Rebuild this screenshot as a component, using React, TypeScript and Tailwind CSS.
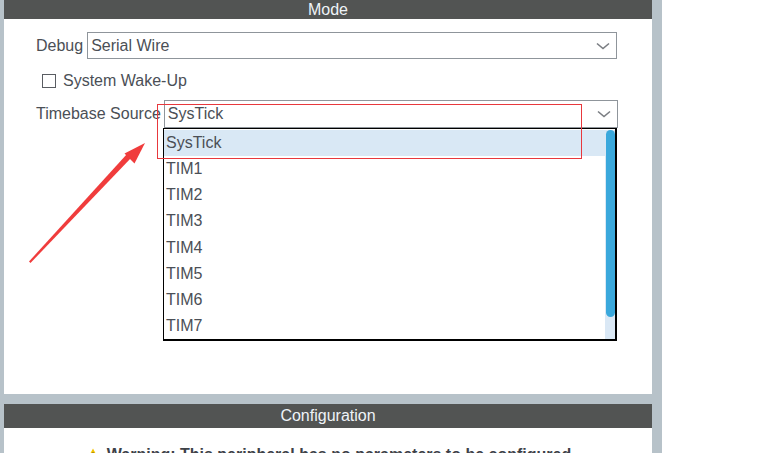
const font = { fontFamily: '"Liberation Sans", Arial, sans-serif' };

const Chevron = () => (
  <svg width="14" height="8" viewBox="0 0 14 8" className="shrink-0">
    <path d="M1 1.5 L7 6.5 L13 1.5" fill="none" stroke="#7a7d82" strokeWidth="1.6" />
  </svg>
);

const Select = ({ value, className }: { value: string; className: string }) => (
  <div
    className={`flex items-center justify-between border border-[#8f959b] bg-white pl-[3px] pr-[6px] ${className}`}
  >
    <span>{value}</span>
    <Chevron />
  </div>
);

const items = ["SysTick", "TIM1", "TIM2", "TIM3", "TIM4", "TIM5", "TIM6", "TIM7"];

const App = () => {
  return (
    <div
      className="relative flex h-[453px] w-[773px] overflow-hidden bg-white text-[16px] text-[#4b4f56]"
      style={font}
    >
      <div className="w-[4px] shrink-0 bg-[#b7c2c9]" />
      <div className="flex w-[648px] shrink-0 flex-col">
        <div className="flex h-[19px] shrink-0 items-center justify-center bg-[#525453] text-[16px] text-[#eef3f8]">
          Mode
        </div>
        <div className="flex h-[375px] shrink-0 flex-col bg-white pl-[32px] pt-[13px]">
          <div className="flex h-[27px] items-center gap-[4px]">
            <span>Debug</span>
            <Select value="Serial Wire" className="h-[27px] w-[530px]" />
          </div>
          <div className="mt-[15px] flex h-[14px] items-center gap-[7px] pl-[6px]">
            <div className="h-[14px] w-[14px] border border-[#5a5d62] bg-white" />
            <span>System Wake-Up</span>
          </div>
          <div className="mt-[12px] flex h-[28px] items-center gap-[3px]">
            <span>Timebase Source</span>
            <Select value="SysTick" className="h-[28px] w-[454px]" />
          </div>
        </div>
        <div className="h-[10px] shrink-0 bg-[#b7c2c9]" />
        <div className="flex h-[24px] shrink-0 items-center justify-center bg-[#525453] text-[#eef3f8]">
          Configuration
        </div>
        <div className="flex shrink-0 justify-center pt-[15px] font-bold text-[#3d4148]">
          <span className="flex items-center gap-[6px]">
            <svg width="16" height="15" viewBox="0 0 16 15">
              <path d="M8 0.5 L15.5 14.5 L0.5 14.5 Z" fill="#f5c400" />
              <rect x="7.2" y="4.5" width="1.6" height="6" fill="#3d4148" />
            </svg>
            Warning: This peripheral has no parameters to be configured
          </span>
        </div>
      </div>
      <div className="w-[10px] shrink-0 bg-[#b7c2c9]" />
      <div className="flex-1 bg-white" />

      {/* open dropdown list */}
      <div className="absolute left-[163px] top-[128px] flex h-[213px] w-[454px] border border-r-2 border-b-2 border-black bg-white pt-[1px]">
        <div className="flex flex-1 flex-col">
          {items.map((it, i) => (
            <div
              key={it}
              className={`flex h-[26.2px] items-center pl-[2px] ${i === 0 ? "bg-[#d9e8f5]" : ""}`}
            >
              {it}
            </div>
          ))}
        </div>
        <div className="w-[10px] bg-[#dae8f5] pl-[1px]">
          <div className="h-[187px] w-[9px] rounded-full bg-[#3aa8dc]" />
        </div>
      </div>

      {/* red highlight box */}
      <div className="absolute left-[157px] top-[104px] h-[55px] w-[425px] border border-[#e8383d]" />

      {/* red arrow */}
      <svg className="absolute left-0 top-0" width="773" height="453" viewBox="0 0 773 453">
        <polygon points="29,261.5 30.5,263 131,158 127,154" fill="#f03c3c" />
        <polygon points="145,143 124.5,153.5 134.5,163.5" fill="#f03c3c" />
      </svg>
    </div>
  );
};

export default App;
